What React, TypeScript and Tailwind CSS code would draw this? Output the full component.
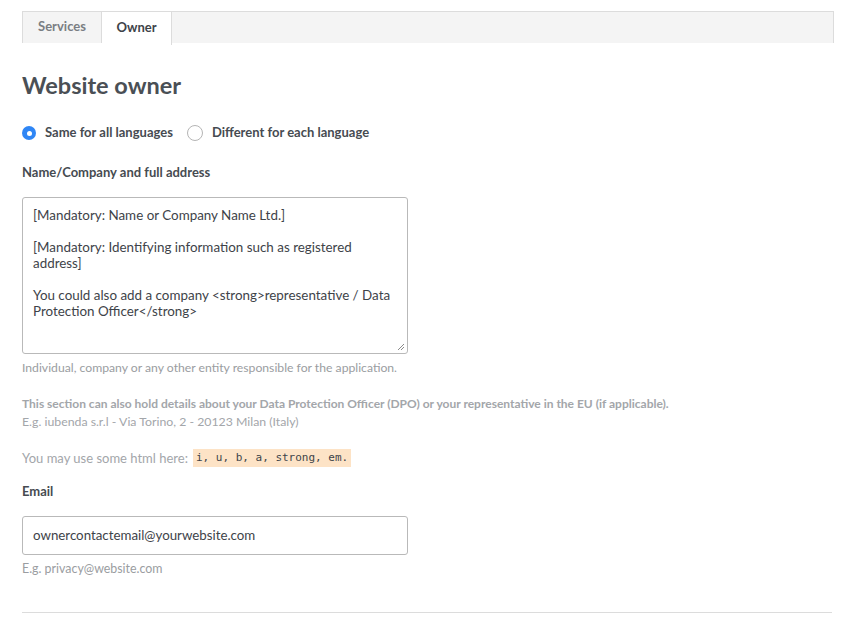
import React from "react";

export default function App() {
  return (
    <div className="w-[844px] h-[623px] bg-white overflow-hidden" style={{ fontFamily: "Lato, 'Open Sans', sans-serif" }}>
      <div className="pt-[11px] px-[22px] pr-[10px]">
        <div className="flex h-[32px] bg-[#f4f4f4] border-t border-x border-[#dcdcdc]">
          <div className="w-[79px] flex items-center justify-center text-[13px] font-bold text-[#7a7e83] border-r border-[#dcdcdc] pb-[2px]">Services</div>
          <div className="w-[70px] flex items-center justify-center text-[13px] font-bold text-[#3e4349] bg-white border-r border-[#dcdcdc] h-[33px] pb-[2px]">Owner</div>
        </div>
      </div>
      <div className="px-[22px] pr-[12px]">
        <h1 className="mt-[27px] text-[23.5px] leading-[30px] font-bold text-[#4a4f55]">Website owner</h1>
        <div className="mt-[23px] flex items-center h-[20px] text-[13px] font-bold text-[#464b51]">
          <span className="w-[14px] h-[14px] rounded-full bg-[#2f86f5] flex items-center justify-center mr-[9px]">
            <span className="w-[5px] h-[5px] rounded-full bg-white" />
          </span>
          <span>Same for all languages</span>
          <span className="w-[16px] h-[16px] rounded-full border border-[#b5b5b5] bg-white ml-[14px] mr-[9px]" />
          <span>Different for each language</span>
        </div>
        <div className="mt-[20px] text-[13px] font-bold text-[#464b51] leading-[18px]">Name/Company and full address</div>
        <div className="relative mt-[16px] w-[386px] h-[157px] border border-[#b9b9b9] rounded-[3px] px-[10px] pt-[9px] text-[13.4px] leading-[16px] text-[#3e4349]">
          <p>[Mandatory: Name or Company Name Ltd.]</p>
          <p className="mt-[16px]">[Mandatory: Identifying information such as registered address]</p>
          <p className="mt-[16px]">You could also add a company &lt;strong&gt;representative / Data Protection Officer&lt;/strong&gt;</p>
          <svg className="absolute right-[2px] bottom-[2px]" width="8" height="8" viewBox="0 0 8 8">
            <line x1="7" y1="1" x2="1" y2="7" stroke="#8a8a8a" strokeWidth="1" />
            <line x1="7" y1="4" x2="4" y2="7" stroke="#8a8a8a" strokeWidth="1" />
          </svg>
        </div>
        <div className="mt-[6px] text-[12.2px] leading-[16px] text-[#9a9da1]">Individual, company or any other entity responsible for the application.</div>
        <div className="mt-[20px] text-[12px] leading-[16px] font-bold text-[#a3a6aa]">This section can also hold details about your Data Protection Officer (DPO) or your representative in the EU (if applicable).</div>
        <div className="mt-[2px] text-[12.3px] leading-[16px] text-[#a3a6aa]">E.g. iubenda s.r.l - Via Torino, 2 - 20123 Milan (Italy)</div>
        <div className="mt-[19px] text-[13px] leading-[18px] text-[#a3a6aa] flex items-center">
          <span>You may use some html here:</span>
          <span className="ml-[5px] px-[3px] bg-[#fde3c6] text-[#3e4349] text-[11px] leading-[18px]" style={{ fontFamily: "'DejaVu Sans Mono', monospace" }}>i, u, b, a, strong, em.</span>
        </div>
        <div className="mt-[15px] text-[13px] font-bold text-[#464b51] leading-[18px]">Email</div>
        <div className="mt-[16px] w-[386px] h-[39px] border border-[#b9b9b9] rounded-[3px] px-[10px] flex items-center text-[13.3px] text-[#3e4349]">ownercontactemail@yourwebsite.com</div>
        <div className="mt-[6px] text-[12.4px] leading-[16px] text-[#9a9da1]">E.g. privacy@website.com</div>
        <div className="mt-[35px] h-px bg-[#dcdcdc]" />
      </div>
    </div>
  );
}
